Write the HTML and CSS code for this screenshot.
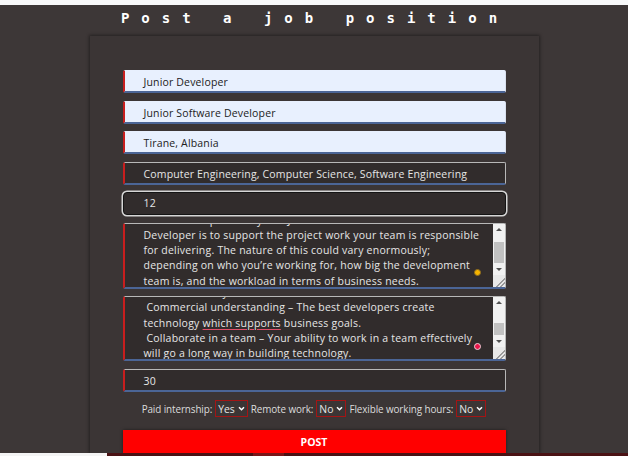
FILE: index.html
```
<!DOCTYPE html>
<html lang="en">
<head>
<meta charset="utf-8">
<title>Post a job position</title>
<link rel="stylesheet" href="styles.css">
</head>
<body>
<div class="topbar"></div>
<h1 class="title">Post a job position</h1>
<form class="card">
  <div class="field autofill">Junior Developer</div>
  <div class="field autofill">Junior Software Developer</div>
  <div class="field autofill">Tirane, Albania</div>
  <div class="field">Computer Engineering, Computer Science, Software Engineering</div>
  <div class="field focused">12</div>
  <div class="ta ta-one">
    <div class="ta-text">
      <p class="ta-inner">The main responsibility of a Junior Software<br>Developer is to support the project work your team is responsible<br>for delivering. The nature of this could vary enormously;<br>depending on who you’re working for, how big the development<br>team is, and the workload in terms of business needs.</p>
    </div>
    <div class="sb">
      <span class="sb-btn sb-up"></span>
      <span class="sb-track"><span class="sb-thumb"></span></span>
      <span class="sb-btn sb-down"></span>
      <span class="sb-corner"></span>
    </div>
    <span class="dot dot-yellow"></span>
  </div>
  <div class="ta ta-two">
    <div class="ta-text">
      <p class="ta-inner">&nbsp;Technical ability<br>&nbsp;Commercial understanding – The best developers create<br>technology <span class="mark">which supports</span> business goals.<br>&nbsp;Collaborate in a team – Your ability to work in a team effectively<br>will go a long way in building technology.</p>
    </div>
    <div class="sb">
      <span class="sb-btn sb-up"></span>
      <span class="sb-track"><span class="sb-thumb"></span></span>
      <span class="sb-btn sb-down"></span>
      <span class="sb-corner"></span>
    </div>
    <span class="dot dot-red"></span>
  </div>
  <div class="field">30</div>
  <div class="options">
    <span class="opt-label">Paid internship:</span>
    <span class="select">Yes<svg class="chev" viewBox="0 0 8 6" width="7" height="5"><path d="M1 1.5 L4 4.5 L7 1.5" fill="none" stroke="#fff" stroke-width="1.8"/></svg></span>
    <span class="opt-label">Remote work:</span>
    <span class="select">No<svg class="chev" viewBox="0 0 8 6" width="7" height="5"><path d="M1 1.5 L4 4.5 L7 1.5" fill="none" stroke="#fff" stroke-width="1.8"/></svg></span>
    <span class="opt-label">Flexible working hours:</span>
    <span class="select">No<svg class="chev" viewBox="0 0 8 6" width="7" height="5"><path d="M1 1.5 L4 4.5 L7 1.5" fill="none" stroke="#fff" stroke-width="1.8"/></svg></span>
  </div>
  <div class="post">POST</div>
</form>
<div class="footer"><span class="f-white"></span><span class="f-maroon"></span><span class="f-red"></span><span class="f-maroon2"></span></div>
</body>
</html>
```
FILE: styles.css
```
* { box-sizing: border-box; }
html, body { margin: 0; padding: 0; }
body {
  background: #3d3737;
  font-family: "Open Sans", "Noto Sans", sans-serif;
  height: 456px;
  overflow: hidden;
}
.topbar { height: 5px; background: #f8f9fa; }
.title {
  margin: 6px 0 0 0;
  height: 25px;
  text-align: center;
  font-family: "DejaVu Sans Mono", monospace;
  font-weight: bold;
  font-size: 14px;
  line-height: 14px;
  letter-spacing: 12px;
  padding-left: 2px;
  color: #fff;
}
.card {
  width: 449px;
  margin: 0 auto;
  background: #3b3535;
  box-shadow: 0 0 3px 1px rgba(0,0,0,0.4);
  padding: 34px 33px 0;
  display: flex;
  flex-direction: column;
  gap: 7.5px;
  height: 417px;
}
.field {
  height: 23px;
  flex: none;
  background: #312c2c;
  color: #e6e6e6;
  border: 1px solid #b8b8b8;
  border-left: 2px solid #c81e1e;
  border-bottom: 2px solid #4b6596;
  border-radius: 2px;
  padding-left: 19px;
  font-size: 10.5px;
  letter-spacing: 0.16px;
  line-height: 22px;
  white-space: nowrap;
}
.field.autofill {
  background: #e8f0fe;
  color: #222;
  border-top-color: #e8f0fe;
  border-right-color: #d8e0ee;
}
.field.focused {
  border: 1px solid #141414;
  border-radius: 4px;
  box-shadow: 0 0 0 1.5px #d6d6d6;
  padding-left: 20px;
  line-height: 21px;
}
.ta {
  position: relative;
  display: flex;
  flex: none;
  background: #312c2c;
  border: 1px solid #b8b8b8;
  border-left: 2px solid #c81e1e;
  border-bottom: 2px solid #4b6596;
  border-radius: 2px;
  color: #e6e6e6;
}
.ta-one { height: 66px; }
.ta-two { height: 65px; }
.ta-text {
  flex: 1;
  overflow: hidden;
  padding-left: 19px;
}
.ta-inner {
  margin: -11px 0 0 0;
  font-size: 10.5px;
  line-height: 15.3px;
  letter-spacing: 0.23px;
  white-space: nowrap;
}
.ta-two .ta-inner { margin-top: -12px; }
.mark {
  text-decoration: underline;
  text-decoration-color: #e0506a;
  text-underline-offset: 2px;
}
.sb {
  width: 12px;
  display: flex;
  flex-direction: column;
  background: #f1f1f1;
}
.sb-btn {
  height: 12px;
  flex: none;
  position: relative;
}
.sb-up::after, .sb-down::after {
  content: "";
  position: absolute;
  left: 3px;
  border-left: 3px solid transparent;
  border-right: 3px solid transparent;
}
.sb-up::after { top: 4px; border-bottom: 3px solid #505050; }
.sb-down::after { top: 5px; border-top: 3px solid #505050; }
.sb-track {
  flex: 1;
  position: relative;
}
.sb-thumb {
  position: absolute;
  left: 1px;
  right: 1px;
  background: #c1c1c1;
}
.ta-one .sb-thumb { top: 6px; height: 21px; }
.ta-two .sb-thumb { top: 14px; height: 12px; }
.sb-corner {
  height: 12px;
  flex: none;
  background:
    linear-gradient(135deg, transparent 0 62%, #9a9a9a 62% 68%, transparent 68% 78%, #9a9a9a 78% 84%, transparent 84%),
    #e8e8e8;
}
.dot {
  position: absolute;
  width: 7px;
  height: 7px;
  border-radius: 50%;
  right: 24px;
}
.dot-yellow { background: #f5b400; border: 1px solid #8a6a20; top: 45px; }
.dot-red { background: #e8164a; border: 1px solid #f0d0d8; top: 46px; }
.options {
  display: flex;
  justify-content: center;
  align-items: center;
  gap: 3px;
  height: 17px;
  margin-top: 1px;
  color: #dcdcdc;
  font-size: 9.9px;
  letter-spacing: -0.1px;
}
.select {
  display: flex;
  align-items: center;
  gap: 3px;
  height: 17px;
  padding: 0 2px;
  border: 1.5px solid #a31515;
  color: #e6e6e6;
  font-size: 10.4px;
  letter-spacing: 0;
}
.chev { display: block; }
.post {
  margin-top: 5px;
  height: 23px;
  flex: none;
  background: #ff0000;
  color: #fff;
  font-weight: bold;
  font-size: 10.5px;
  text-align: center;
  line-height: 25px;
  box-shadow: 0 0 3px rgba(0,0,0,0.5);
}
.footer {
  display: flex;
  height: 6px;
}
.f-white { width: 107px; background: #f4f4f4; }
.f-maroon { width: 146px; background: #4a1214; }
.f-red { width: 31px; background: #7a1618; }
.f-maroon2 { flex: 1; background: #4a1214; }
```
